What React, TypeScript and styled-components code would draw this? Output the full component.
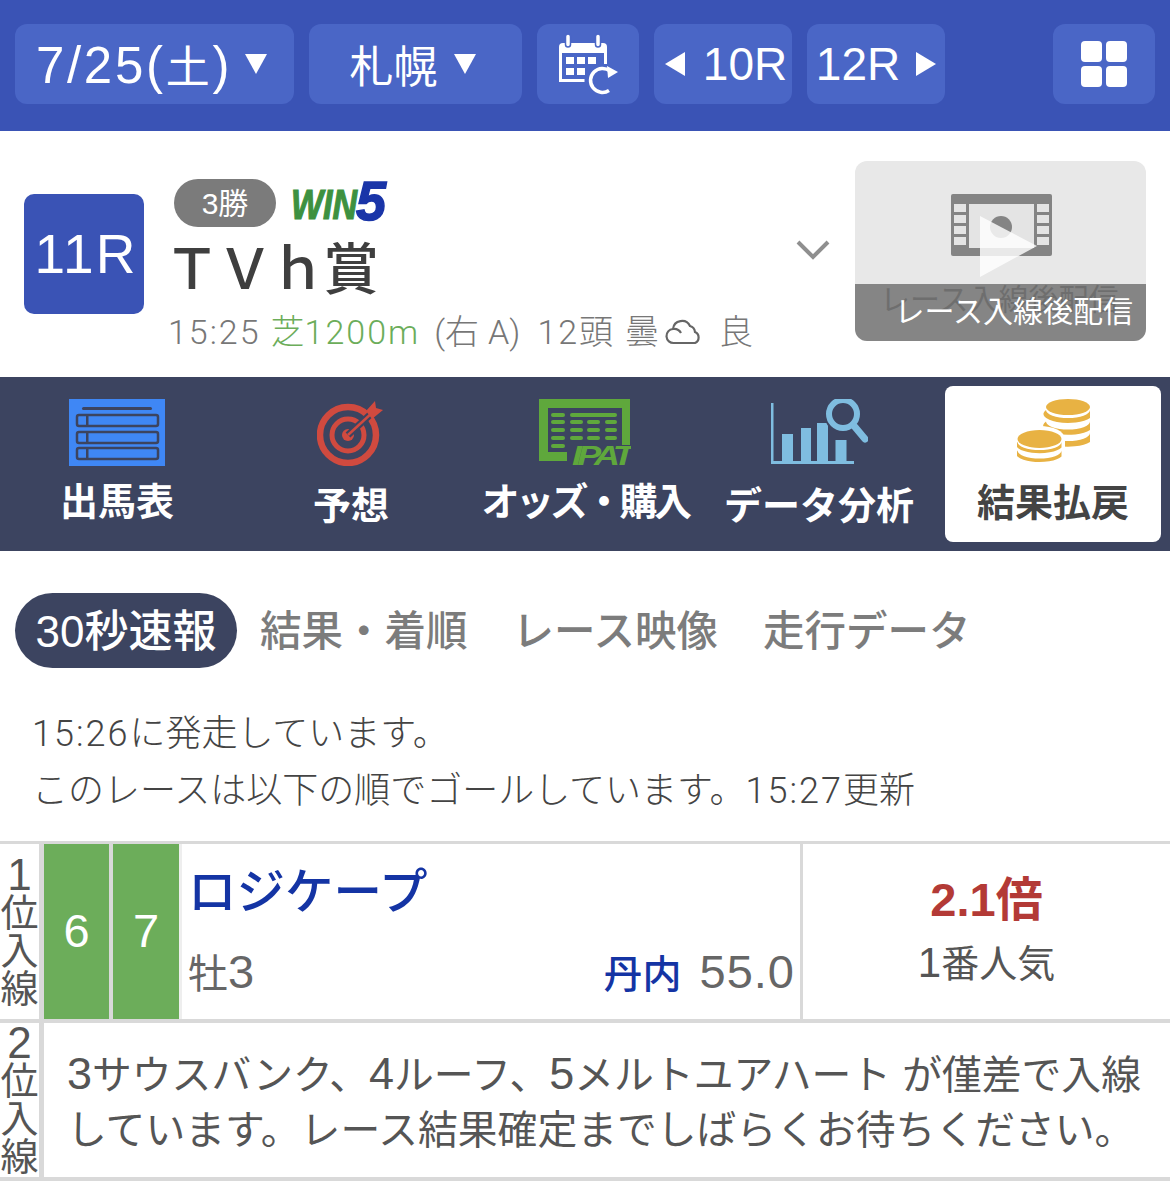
import React from 'react'
import styled, { createGlobalStyle } from 'styled-components'

const JP = `"Liberation Sans", "Noto Sans CJK JP", sans-serif`
const LIGHT = `"Roboto", "Noto Sans CJK JP", sans-serif`

const GlobalStyle = createGlobalStyle`
  html, body { margin: 0; padding: 0; background: #fff; }
  body { font-family: ${JP}; color: #555; overflow: hidden; }
  * { box-sizing: border-box; }
`

const Page = styled.div`
  width: 1170px;
  height: 1191px;
  overflow: hidden;
`

const TopBar = styled.header`
  height: 131px;
  background: #3a53b5;
  padding: 24px 15px 0;
  display: flex;
  align-items: flex-start;
  gap: 15px;
`

const TopButton = styled.div<{ $w: number; $gap?: number; $auto?: boolean; $pl?: number }>`
  width: ${(p) => p.$w}px;
  height: 80px;
  margin-left: ${(p) => (p.$auto ? 'auto' : '0')};
  padding-left: ${(p) => p.$pl ?? 0}px;
  border-radius: 12px;
  background: #4a66c6;
  color: #fff;
  display: flex;
  align-items: center;
  justify-content: center;
  gap: ${(p) => p.$gap ?? 13}px;
  font-size: 51px;
  white-space: nowrap;
`

const RaceButton = styled(TopButton)`
  font-size: 46px;
`

const DateLabel = styled.span<{ $spacing?: number }>`
  margin-left: -6px;
  letter-spacing: ${(p) => p.$spacing ?? 0}px;
`

const Kanji = styled.span<{ $size: number }>`
  font-size: ${(p) => p.$size}px;
`

const RaceHead = styled.section`
  height: 246px;
  padding: 30px 24px 0;
  display: flex;
`

const RaceNo = styled.div`
  width: 120px;
  height: 120px;
  margin-top: 33px;
  padding-left: 4px;
  border-radius: 10px;
  background: #3a53b5;
  color: #fff;
  font-size: 55px;
  letter-spacing: 2px;
  display: flex;
  align-items: center;
  justify-content: center;
`

const RaceInfo = styled.div`
  width: 625px;
  margin-left: 24px;
  padding-top: 18px;
`

const BadgeRow = styled.div`
  display: flex;
  align-items: center;
  gap: 14px;
  margin-left: 6px;
  height: 48px;
`

const Grade = styled.span`
  width: 102px;
  height: 48px;
  padding-bottom: 4px;
  border-radius: 24px;
  background: #7b7b7b;
  color: #fff;
  font-size: 30px;
  display: flex;
  align-items: center;
  justify-content: center;
`

const RaceName = styled.h1`
  margin: 10px 0 0 -4px;
  height: 66px;
  font-size: 56px;
  letter-spacing: -3px;
  line-height: 66px;
  font-weight: 500;
  color: #3f3f3f;
  white-space: nowrap;
`

const RaceMeta = styled.div`
  margin-top: 7px;
  font-family: ${LIGHT};
  font-size: 34px;
  font-weight: 300;
  line-height: 44px;
  color: #777;
  white-space: nowrap;
  display: flex;
  align-items: center;
`

const Num = styled.span`
  letter-spacing: 2px;
`

const Turf = styled.span`
  color: #6cad5a;
  margin: 0 14px 0 10px;
`

const MetaPart = styled.span<{ $ml: number }>`
  margin-left: ${(p) => p.$ml}px;
  display: inline-flex;
`

const Chevron = styled.div`
  width: 36px;
  margin-left: 2px;
  padding-top: 77px;
`

const VideoCard = styled.div`
  position: relative;
  width: 291px;
  height: 180px;
  margin-left: 24px;
  border-radius: 12px;
  background: #e8e8e8;
  overflow: hidden;
  display: flex;
  justify-content: center;
  padding-top: 33px;
`

const VideoLabel = styled.div`
  position: absolute;
  left: 0;
  right: 0;
  bottom: 0;
  height: 57px;
  background: rgba(115, 115, 115, 0.85);
  color: #fff;
  font-size: 30px;
  line-height: 56px;
  text-align: right;
  padding-right: 13px;
`

const GhostLabel = styled.span`
  position: absolute;
  left: 25px;
  bottom: 22px;
  font-size: 30px;
  color: #555;
  white-space: nowrap;
`

const MenuBar = styled.nav`
  height: 174px;
  background: #3c4460;
  display: grid;
  grid-template-columns: repeat(5, 234px);
  padding: 9px 0;
`

const MenuItem = styled.div<{ $active?: boolean; $tight?: boolean }>`
  display: flex;
  flex-direction: column;
  align-items: center;
  color: ${(p) => (p.$active ? '#444' : '#fff')};
  background: ${(p) => (p.$active ? '#fff' : 'transparent')};
  border-radius: ${(p) => (p.$active ? '8px' : '0')};
  margin: ${(p) => (p.$active ? '0 9px' : '0')};
  font-size: 38px;
  font-weight: 700;
  line-height: 46px;
  letter-spacing: ${(p) => (p.$tight ? '-3.5px' : '0')};
  white-space: nowrap;
`

const MenuIcon = styled.div<{ $h: number }>`
  height: ${(p) => p.$h}px;
  padding-top: 13px;
`

const Tabs = styled.div`
  margin-top: 42px;
  padding-left: 15px;
  display: flex;
  align-items: center;
  height: 75px;
`

const Tab = styled.div<{ $active?: boolean }>`
  font-size: ${(p) => (p.$active ? 44 : 41.5)}px;
  font-weight: 500;
  color: ${(p) => (p.$active ? '#fff' : '#7c7c7c')};
  background: ${(p) => (p.$active ? '#3c4460' : 'transparent')};
  height: 75px;
  line-height: 78px;
  border-radius: 38px;
  padding: ${(p) => (p.$active ? '0 20.5px' : '0')};
  margin-right: ${(p) => (p.$active ? '23px' : '45px')};
  white-space: nowrap;
`

const Notice = styled.div`
  margin-top: 38px;
  padding-left: 32px;
  font-family: ${LIGHT};
  font-size: 36px;
  font-weight: 300;
  line-height: 57px;
  color: #444;
  white-space: nowrap;
`

const ResultTable = styled.div`
  margin-top: 21px;
  border-top: 3px solid #d9d9d9;
`

const ResultRow = styled.div<{ $h: number }>`
  display: flex;
  height: ${(p) => p.$h}px;
  border-bottom: 4px solid #d9d9d9;
`

const Rank = styled.div`
  width: 44px;
  flex-shrink: 0;
  border-right: 5px solid #d9d9d9;
  font-size: 38px;
  line-height: 38px;
  text-align: center;
  color: #555;
  overflow: hidden;
  display: flex;
  flex-direction: column;
  justify-content: center;
`

const RankNo = styled.span`
  font-size: 44px;
`

const Frame = styled.div<{ $edge: string; $border: number }>`
  width: 69px;
  flex-shrink: 0;
  padding-bottom: 3px;
  background: #6cad5a;
  color: #fff;
  font-size: 47px;
  display: flex;
  align-items: center;
  justify-content: center;
  border-right: ${(p) => p.$border}px solid ${(p) => p.$edge};
`

const HorseCell = styled.div`
  width: 621px;
  flex-shrink: 0;
  border-right: 3px solid #d9d9d9;
  padding: 0 5px 0 6px;
  display: flex;
  flex-direction: column;
  justify-content: space-between;
`

const HorseName = styled.div`
  margin-top: 17px;
  font-size: 48.5px;
  line-height: 62px;
  font-weight: 500;
  color: #1434a4;
  white-space: nowrap;
`

const HorseSub = styled.div`
  display: flex;
  justify-content: space-between;
  align-items: baseline;
  font-size: 47px;
  line-height: 50px;
  margin-bottom: 19px;
  color: #666;
`

const Weight = styled.span`
  letter-spacing: 1px;
`

const Jockey = styled.span`
  color: #1434a4;
  font-size: 39px;
  font-weight: 500;
  letter-spacing: 0;
  margin-right: 4px;
`

const OddsCell = styled.div`
  flex: 1;
  display: flex;
  flex-direction: column;
  align-items: center;
  padding-top: 28px;
`

const Odds = styled.div`
  color: #b33a36;
  font-size: 47px;
  line-height: 56px;
  font-weight: 700;
`

const Popular = styled.div`
  color: #555;
  font-size: 42px;
  line-height: 50px;
  margin-top: 10px;
`

const Pending = styled.div`
  flex: 1;
  padding: 23px 0 0 23px;
  font-size: 39.8px;
  line-height: 55px;
  color: #555;
  white-space: nowrap;
`

const Triangle = ({ dir = 'down' }: { dir?: 'down' | 'left' | 'right' }) =>
  dir === 'down' ? (
    <svg width="22" height="20" viewBox="0 0 22 20">
      <polygon points="0,0 22,0 11,20" fill="#fff" />
    </svg>
  ) : (
    <svg width="20" height="24" viewBox="0 0 20 24">
      <polygon points={dir === 'left' ? '20,0 20,24 0,12' : '0,0 0,24 20,12'} fill="#fff" />
    </svg>
  )

const CalendarIcon = () => (
  <svg width="62" height="62" viewBox="0 0 62 62" fill="none">
    <path d="M2 20v-6a4 4 0 0 1 4-4h40a4 4 0 0 1 4 4v6z" fill="#fff" />
    <path d="M3.5 18v29.5h24M48.5 18v13" stroke="#fff" strokeWidth="3" />
    <rect x="8.5" y="1" width="5" height="13" rx="2.5" fill="#fff" stroke="#4a66c6" strokeWidth="1.5" />
    <rect x="38.5" y="1" width="5" height="13" rx="2.5" fill="#fff" stroke="#4a66c6" strokeWidth="1.5" />
    <g fill="#fff">
      <rect x="9" y="24" width="8" height="7" />
      <rect x="20" y="24" width="8" height="7" />
      <rect x="31" y="24" width="8" height="7" />
      <rect x="9" y="35" width="8" height="7" />
      <rect x="20" y="35" width="8" height="7" />
    </g>
    <path d="M53 38A12 12 0 1 0 52 57.5" stroke="#fff" strokeWidth="3.5" />
    <path d="M50 33l11 6-10 6z" fill="#fff" />
  </svg>
)

const GridIcon = () => (
  <svg width="46" height="46" viewBox="0 0 46 46">
    <rect x="0" y="0" width="21" height="21" rx="4" fill="#fff" />
    <rect x="25" y="0" width="21" height="21" rx="4" fill="#fff" />
    <rect x="0" y="25" width="21" height="21" rx="4" fill="#fff" />
    <rect x="25" y="25" width="21" height="21" rx="4" fill="#fff" />
  </svg>
)

const Win5Logo = () => (
  <svg width="100" height="50" viewBox="0 0 100 50">
    <text
      x="1"
      y="41"
      fontFamily="'Liberation Sans', sans-serif"
      fontWeight="700"
      fontStyle="italic"
      fontSize="42"
      fill="#3d9140"
      stroke="#3d9140"
      strokeWidth="1.2"
      textLength="66"
      lengthAdjust="spacingAndGlyphs"
    >
      WIN
    </text>
    <text
      x="66"
      y="42"
      fontFamily="'Liberation Sans', sans-serif"
      fontWeight="700"
      fontStyle="italic"
      fontSize="56"
      fill="#1a35a8"
      stroke="#1a35a8"
      strokeWidth="1.5"
      textLength="30"
      lengthAdjust="spacingAndGlyphs"
    >
      5
    </text>
  </svg>
)

const ChevronIcon = () => (
  <svg width="36" height="24" viewBox="0 0 36 24" fill="none">
    <path d="M3 4l15 15L33 4" stroke="#8f8f8f" strokeWidth="4" />
  </svg>
)

const CloudIcon = () => (
  <svg width="38" height="28" viewBox="0 0 38 28" fill="none">
    <path d="M9 25a7 7 0 0 1-1-14 9 9 0 0 1 17-3 7 7 0 0 1 5 6 6 6 0 0 1 0 11z" stroke="#666" strokeWidth="2.2" />
    <path d="M8 11a8 8 0 0 1 8 4" stroke="#666" strokeWidth="2.2" />
  </svg>
)

const FilmIcon = () => (
  <svg width="108" height="90" viewBox="0 0 108 90">
    <rect x="4" y="0" width="101" height="62" rx="2" fill="#848484" />
    <g fill="#e4e4e4">
      {[10, 21, 32, 43].map((y) => (
        <React.Fragment key={y}>
          <rect x="7" y={y} width="12" height="8" />
          <rect x="90" y={y} width="12" height="8" />
        </React.Fragment>
      ))}
      <rect x="22" y="10" width="65" height="44" />
    </g>
    <circle cx="54" cy="33" r="11" fill="#848484" />
    <polygon points="33,22 33,83 90,52" fill="#fff" opacity="0.82" />
  </svg>
)

const EntryIcon = () => (
  <svg width="96" height="67" viewBox="0 0 96 67">
    <rect width="96" height="67" fill="#3f87f5" />
    <rect x="13" y="8" width="70" height="3" rx="1.5" fill="#3c4460" />
    {[16, 33, 49].map((y) => (
      <g key={y}>
        <rect x="8" y={y} width="81" height="11" rx="2" fill="none" stroke="#3c4460" strokeWidth="2.5" />
        <rect x="17" y={y} width="2.5" height="11" fill="#3c4460" />
      </g>
    ))}
  </svg>
)

const TargetIcon = () => (
  <svg width="68" height="67" viewBox="0 0 68 67" fill="none">
    <circle cx="31" cy="36" r="28" stroke="#d04a3f" strokeWidth="6.5" />
    <circle cx="31" cy="36" r="16" stroke="#d04a3f" strokeWidth="5" />
    <circle cx="31" cy="36" r="6" fill="#d04a3f" />
    <path d="M31 36L55 14" stroke="#3c4460" strokeWidth="7" />
    <path d="M31 36L56 13" stroke="#d04a3f" strokeWidth="2.5" />
    <path d="M49 12L58 2l1 7 7 2-11 9z" fill="#d04a3f" />
  </svg>
)

const IpatIcon = () => (
  <svg width="92" height="67" viewBox="0 0 92 67">
    <path d="M0 0h91v50h-8V9H9v44h19v9H0z" fill="#5fa83c" />
    <g fill="#5fa83c">
      <rect x="12" y="14" width="14" height="4" rx="2" />
      <rect x="31" y="14" width="47" height="4" rx="2" />
      {[21, 29, 37].map((y) => (
        <React.Fragment key={y}>
          <rect x="12" y={y} width="14" height="4" rx="2" />
          <rect x="31" y={y} width="13" height="4" rx="2" />
          <rect x="48" y={y} width="13" height="4" rx="2" />
          <rect x="66" y={y} width="12" height="4" rx="2" />
        </React.Fragment>
      ))}
      <rect x="12" y="45" width="14" height="4" rx="2" />
    </g>
    <text
      x="33"
      y="66"
      fontFamily="'Liberation Sans', sans-serif"
      fontWeight="700"
      fontStyle="italic"
      fontSize="27"
      fill="#5fa83c"
      stroke="#3c4460"
      strokeWidth="2"
      paintOrder="stroke"
      textLength="58"
      lengthAdjust="spacingAndGlyphs"
    >
      IPAT
    </text>
  </svg>
)

const DataIcon = () => (
  <svg width="97" height="67" viewBox="0 0 97 67" fill="#7fbde0">
    <rect x="0" y="4" width="2.5" height="61" />
    <rect x="0" y="62" width="83" height="3" />
    <rect x="11" y="35" width="11" height="27" />
    <rect x="30" y="29" width="10" height="33" />
    <rect x="46" y="24" width="11" height="38" />
    <rect x="64.5" y="41" width="11" height="21" />
    <circle cx="72" cy="15" r="19" fill="#3c4460" />
    <circle cx="72" cy="15" r="14" fill="none" stroke="#7fbde0" strokeWidth="6" />
    <path d="M84 28l10 12" stroke="#7fbde0" strokeWidth="7" strokeLinecap="round" />
  </svg>
)

// one coin of a stack: the side of it, below the top face
const CoinBand = ({ cx, y, rx, ry, h }: { cx: number; y: number; rx: number; ry: number; h: number }) => (
  <path
    d={`M${cx - rx} ${y}A${rx} ${ry} 0 0 0 ${cx + rx} ${y}v${h}A${rx} ${ry} 0 0 1 ${cx - rx} ${y}z`}
    fill="#e8b243"
  />
)

const CoinsIcon = () => (
  <svg width="73" height="67" viewBox="0 0 73 67">
    <ellipse cx="51" cy="8" rx="22" ry="8" fill="#e8b243" />
    <CoinBand cx={51} y={11} rx={22} ry={8} h={8} />
    <CoinBand cx={51} y={22.5} rx={22} ry={8} h={8.5} />
    <CoinBand cx={51} y={34} rx={22} ry={8} h={9} />
    <ellipse cx="22.5" cy="39" rx="25" ry="12" fill="#fff" />
    <path d="M-2 39v18c0 5 10 10 24 10s26-5 26-10V39z" fill="#fff" />
    <ellipse cx="22.5" cy="40" rx="22" ry="9" fill="#e8b243" />
    <CoinBand cx={22.5} y={43} rx={22} ry={8} h={5.5} />
    <CoinBand cx={22.5} y={51.5} rx={22} ry={8} h={6} />
  </svg>
)

export default function App() {
  return (
    <Page>
      <GlobalStyle />
      <TopBar>
        <TopButton $w={279}>
          <DateLabel $spacing={2.7}>
            7/25(<Kanji $size={44}>土</Kanji>)
          </DateLabel>
          <Triangle />
        </TopButton>
        <TopButton $w={213} $gap={16}>
          <DateLabel>
            <Kanji $size={44}>札幌</Kanji>
          </DateLabel>
          <Triangle />
        </TopButton>
        <TopButton $w={102}>
          <CalendarIcon />
        </TopButton>
        <RaceButton $w={138} $gap={18} $pl={6}>
          <Triangle dir="left" />
          10R
        </RaceButton>
        <RaceButton $w={138} $gap={16}>
          12R
          <Triangle dir="right" />
        </RaceButton>
        <TopButton $w={102} $auto>
          <GridIcon />
        </TopButton>
      </TopBar>

      <RaceHead>
        <RaceNo>11R</RaceNo>
        <RaceInfo>
          <BadgeRow>
            <Grade>3勝</Grade>
            <Win5Logo />
          </BadgeRow>
          <RaceName>ＴＶｈ賞</RaceName>
          <RaceMeta>
            <Num>15:25</Num>
            <Turf>
              芝<Num>1200m</Num>
            </Turf>
            (右 <MetaPart $ml={9}>A)</MetaPart>
            <MetaPart $ml={17}>
              <Num>12</Num>頭
            </MetaPart>
            <MetaPart $ml={12}>曇</MetaPart>
            <MetaPart $ml={6}>
              <CloudIcon />
            </MetaPart>
            <MetaPart $ml={16}>良</MetaPart>
          </RaceMeta>
        </RaceInfo>
        <Chevron>
          <ChevronIcon />
        </Chevron>
        <VideoCard>
          <FilmIcon />
          <GhostLabel>レース入線後配信</GhostLabel>
          <VideoLabel>レース入線後配信</VideoLabel>
        </VideoCard>
      </RaceHead>

      <MenuBar>
        <MenuItem>
          <MenuIcon $h={93}><EntryIcon /></MenuIcon>
          出馬表
        </MenuItem>
        <MenuItem>
          <MenuIcon $h={97}><TargetIcon /></MenuIcon>
          予想
        </MenuItem>
        <MenuItem $tight>
          <MenuIcon $h={93}><IpatIcon /></MenuIcon>
          オッズ・購入
        </MenuItem>
        <MenuItem>
          <MenuIcon $h={97}><DataIcon /></MenuIcon>
          データ分析
        </MenuItem>
        <MenuItem $active>
          <MenuIcon $h={94}><CoinsIcon /></MenuIcon>
          結果払戻
        </MenuItem>
      </MenuBar>

      <Tabs>
        <Tab $active>30秒速報</Tab>
        <Tab>結果・着順</Tab>
        <Tab>レース映像</Tab>
        <Tab>走行データ</Tab>
      </Tabs>

      <Notice>
        <Num>15:26</Num>に発走しています。
        <br />
        このレースは以下の順でゴールしています。<Num>15:27</Num>更新
      </Notice>

      <ResultTable>
        <ResultRow $h={179}>
          <Rank>
            <RankNo>1</RankNo>
            <span>位</span>
            <span>入</span>
            <span>線</span>
          </Rank>
          <Frame $edge="#d9d9d9" $border={4}>6</Frame>
          <Frame $edge="#eeeeee" $border={3}>7</Frame>
          <HorseCell>
            <HorseName>ロジケープ</HorseName>
            <HorseSub>
              <span>
                <Kanji $size={40}>牡</Kanji>3
              </span>
              <Weight>
                <Jockey>丹内</Jockey> 55.0
              </Weight>
            </HorseSub>
          </HorseCell>
          <OddsCell>
            <Odds>2.1倍</Odds>
            <Popular>
              1<Kanji $size={38}>番人気</Kanji>
            </Popular>
          </OddsCell>
        </ResultRow>
        <ResultRow $h={158}>
          <Rank>
            <RankNo>2</RankNo>
            <span>位</span>
            <span>入</span>
            <span>線</span>
          </Rank>
          <Pending>
            <Kanji $size={45}>3</Kanji>サウスバンク、<Kanji $size={45}>4</Kanji>ルーフ、<Kanji $size={45}>5</Kanji>メルトユアハート が僅差で入線
            <br />
            しています。レース結果確定までしばらくお待ちください。
          </Pending>
        </ResultRow>
      </ResultTable>
    </Page>
  )
}
